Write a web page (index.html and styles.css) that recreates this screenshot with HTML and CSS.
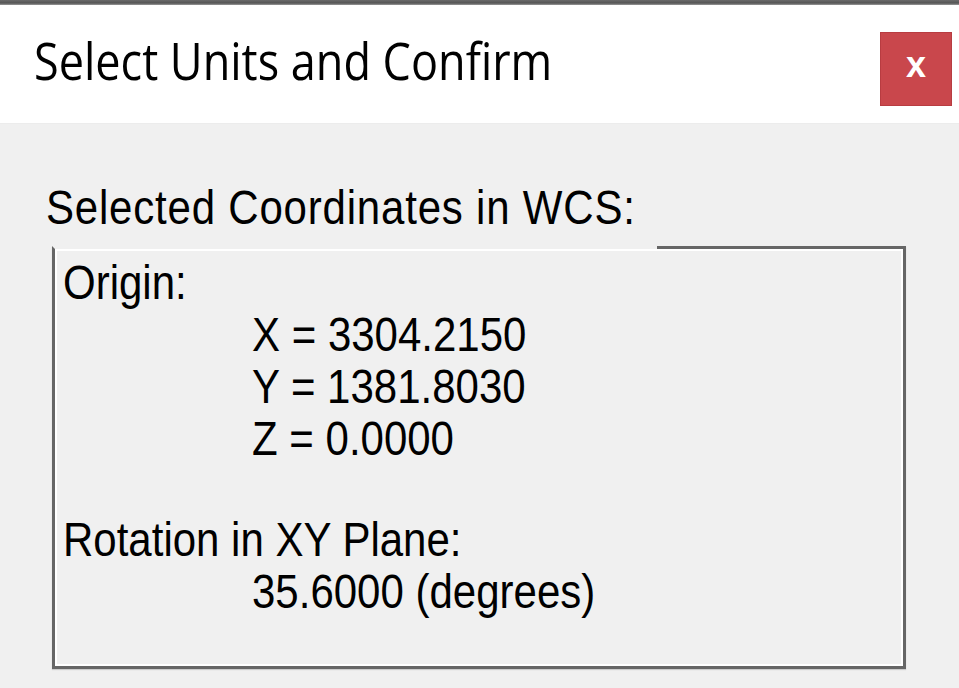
FILE: index.html
```html
<!DOCTYPE html>
<html lang="en">
<head>
<meta charset="utf-8">
<title>Select Units and Confirm</title>
<link rel="stylesheet" href="styles.css">
</head>
<body>
<div class="topstrip"></div>
<header class="titlebar">
  <h1 class="title">Select Units and Confirm</h1>
  <button class="close" type="button" aria-label="Close">x</button>
</header>
<main class="content">
  <div class="group-label">Selected Coordinates in WCS:</div>
  <section class="group">
    <div class="line">Origin:</div>
    <div class="line indent">X = 3304.2150</div>
    <div class="line indent">Y = 1381.8030</div>
    <div class="line indent">Z = 0.0000</div>
    <div class="line spaced">Rotation in XY Plane:</div>
    <div class="line indent">35.6000 (degrees)</div>
  </section>
</main>
</body>
</html>
```
FILE: styles.css
```css
html, body {
  margin: 0;
  padding: 0;
}
body {
  width: 959px;
  height: 688px;
  overflow: hidden;
  background: #f0f0f0;
  color: #000;
  font-family: "Liberation Sans", Arial, sans-serif;
}
.topstrip {
  height: 5px;
  background: linear-gradient(#6a6a6a, #555 60%, #9a9a9a);
}
.titlebar {
  display: flex;
  justify-content: space-between;
  align-items: flex-start;
  background: #fff;
  padding: 27px 7px 17px 34px;
  border-bottom: 1px solid #ececec;
}
.title {
  margin: 0;
  font-family: "Open Sans", "Noto Sans", sans-serif;
  font-weight: 400;
  font-size: 45px;
  line-height: 56px;
  white-space: nowrap;
  transform: scaleY(1.15);
  transform-origin: left center;
}
.close {
  width: 72px;
  height: 74px;
  margin: 0;
  border: 1px solid #b83c41;
  background: #c9474c;
  color: #fff;
  font-family: "Liberation Sans", Arial, sans-serif;
  font-weight: 700;
  font-size: 36px;
  line-height: 1;
  padding: 0 0 8px;
  cursor: pointer;
}
.content {
  padding: 58px 0 0 46px;
}
.group-label {
  font-size: 42px;
  line-height: 52px;
  letter-spacing: 0.8px;
  white-space: nowrap;
  transform: scaleY(1.16);
  transform-origin: left center;
}
.group {
  box-sizing: border-box;
  margin: 12px 0 0 6px;
  width: 854px;
  height: 423px;
  border: 3px solid #666;
  border-top-color: transparent;
  background-color: #f0f0f0;
  background-image: linear-gradient(#666, #666);
  background-origin: border-box;
  background-clip: border-box;
  background-size: 249px 3px;
  background-position: right top;
  background-repeat: no-repeat;
  box-shadow: inset 2px 2px 0 #fff, inset -2px -2px 0 #fff, 0 1px 1px rgba(0,0,0,0.15);
  padding: 8px 0 0 8px;
}
.line {
  font-size: 42px;
  line-height: 52px;
  white-space: nowrap;
  transform: scaleY(1.16);
  transform-origin: left center;
}
.indent {
  padding-left: 189px;
}
.spaced {
  margin-top: 49px;
}
```
